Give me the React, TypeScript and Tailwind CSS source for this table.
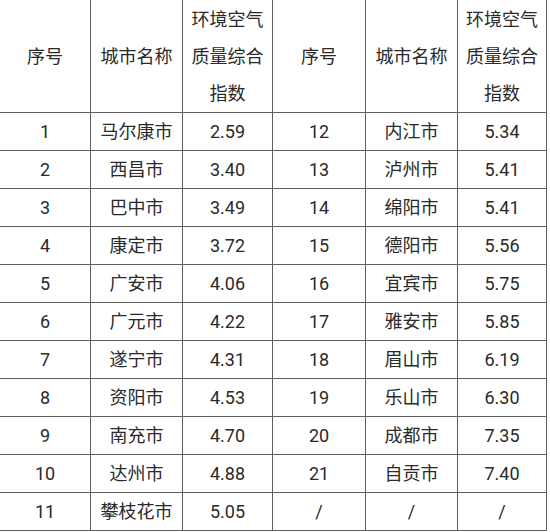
import React from "react";

const rows: [string, string, string, string, string, string][] = [
  ["1", "马尔康市", "2.59", "12", "内江市", "5.34"],
  ["2", "西昌市", "3.40", "13", "泸州市", "5.41"],
  ["3", "巴中市", "3.49", "14", "绵阳市", "5.41"],
  ["4", "康定市", "3.72", "15", "德阳市", "5.56"],
  ["5", "广安市", "4.06", "16", "宜宾市", "5.75"],
  ["6", "广元市", "4.22", "17", "雅安市", "5.85"],
  ["7", "遂宁市", "4.31", "18", "眉山市", "6.19"],
  ["8", "资阳市", "4.53", "19", "乐山市", "6.30"],
  ["9", "南充市", "4.70", "20", "成都市", "7.35"],
  ["10", "达州市", "4.88", "21", "自贡市", "7.40"],
  ["11", "攀枝花市", "5.05", "/", "/", "/"],
];

const cell = "flex items-center justify-center border-r border-b border-[#5f5f5f] text-center";

function Header() {
  return (
    <>
      <div className={`${cell} h-[113px]`}>序号</div>
      <div className={`${cell} h-[113px]`}>城市名称</div>
      <div className={`${cell} h-[113px] leading-[37px]`}>
        环境空气
        <br />
        质量综合
        <br />
        指数
      </div>
    </>
  );
}

export default function App() {
  return (
    <div className="w-[550px] h-[532px] bg-white overflow-hidden">
      <div
        className="grid grid-cols-[91px_92px_90px_93px_92px_89px] text-[18px] text-[#2a2a2a]"
        style={{ fontFamily: 'Roboto, "Noto Sans CJK SC", sans-serif' }}
      >
        <Header />
        <Header />
        {rows.map((r, i) =>
          r.map((v, j) => (
            <div key={`${i}-${j}`} className={`${cell} h-[38px]`}>
              {v}
            </div>
          ))
        )}
      </div>
    </div>
  );
}
